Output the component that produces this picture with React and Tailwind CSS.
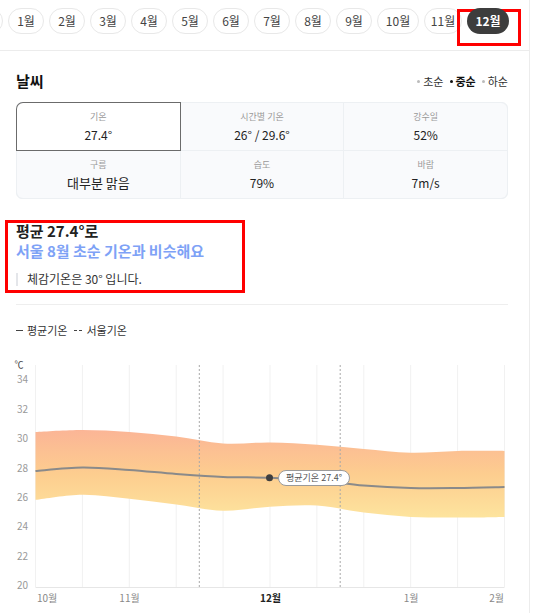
import React from "react";

const months = [
  { label: "", w: "w-[36px]" },
  { label: "1월", w: "w-[36px]" },
  { label: "2월", w: "w-[36px]" },
  { label: "3월", w: "w-[36px]" },
  { label: "4월", w: "w-[36px]" },
  { label: "5월", w: "w-[36px]" },
  { label: "6월", w: "w-[36px]" },
  { label: "7월", w: "w-[36px]" },
  { label: "8월", w: "w-[36px]" },
  { label: "9월", w: "w-[36px]" },
  { label: "10월", w: "w-[42px]" },
  { label: "11월", w: "w-[38px]" },
];

const stats = [
  { label: "기온", value: "27.4°", active: true },
  { label: "시간별 기온", value: "26° / 29.6°" },
  { label: "강수일", value: "52%" },
  { label: "구름", value: "대부분 맑음", big: true },
  { label: "습도", value: "79%" },
  { label: "바람", value: "7m/s" },
];

// chart geometry, in page pixels
const X0 = 35.5;
const STEP = 46.9;
const xs = Array.from({ length: 11 }, (_, i) => X0 + STEP * i);
const yOf = (t) => 586.5 - (t - 20) * 14.7;

const upper = [432, 430, 432, 436.6, 443.5, 442.4, 444.8, 449, 452.7, 451, 451];
const lower = [499.8, 494.7, 498.8, 504.6, 510.8, 506.7, 505.6, 512.5, 516.9, 517.6, 516.9];
const mean = [471, 467.5, 470, 474, 477, 477.7, 480.5, 485.5, 488, 488, 487];

const segs = (pts) => {
  let d = "";
  for (let i = 0; i < pts.length - 1; i++) {
    const p0 = pts[i - 1] || pts[i];
    const p1 = pts[i];
    const p2 = pts[i + 1];
    const p3 = pts[i + 2] || p2;
    const c1x = p1[0] + (p2[0] - p0[0]) / 6;
    const c1y = p1[1] + (p2[1] - p0[1]) / 6;
    const c2x = p2[0] - (p3[0] - p1[0]) / 6;
    const c2y = p2[1] - (p3[1] - p1[1]) / 6;
    d += ` C${c1x},${c1y} ${c2x},${c2y} ${p2[0]},${p2[1]}`;
  }
  return d;
};

const upPts = xs.map((x, i) => [x, upper[i]]);
const loPts = xs.map((x, i) => [x, lower[i]]).reverse();
const meanPts = xs.map((x, i) => [x, mean[i]]);

const bandPath = `M${upPts[0][0]},${upPts[0][1]}${segs(upPts)} L${loPts[0][0]},${loPts[0][1]}${segs(loPts)} Z`;
const meanPath = `M${meanPts[0][0]},${meanPts[0][1]}${segs(meanPts)}`;

const Chart = () => (
  <svg width="530" height="273" viewBox="0 340 530 273" className="block mt-[3px]" fontFamily="'Noto Sans CJK KR', sans-serif">
    <defs>
      <linearGradient id="band" x1="0" y1="430" x2="0" y2="518" gradientUnits="userSpaceOnUse">
        <stop offset="0" stopColor="#fbb596" />
        <stop offset="0.5" stopColor="#fdcd8f" />
        <stop offset="1" stopColor="#fde49e" />
      </linearGradient>
    </defs>
    <text x="19" y="366" fontSize="9" fill="#444" textAnchor="middle" dominantBaseline="middle">℃</text>
    {[34, 32, 30, 28, 26, 24, 22, 20].map((t) => (
      <text key={t} x="28" y={yOf(t)} fontSize="10" fill="#999" textAnchor="end" dominantBaseline="middle">{t}</text>
    ))}
    {xs.map((x) => (
      <line key={x} x1={x} y1="365" x2={x} y2="587" stroke="#f1f1f1" strokeWidth="1" />
    ))}
    <path d={bandPath} fill="url(#band)" />
    <line x1="199.3" y1="365" x2="199.3" y2="587" stroke="#a8a8a8" strokeWidth="1" strokeDasharray="2 2" />
    <line x1="340.2" y1="365" x2="340.2" y2="587" stroke="#a8a8a8" strokeWidth="1" strokeDasharray="2 2" />
    <line x1={X0} y1="587.5" x2={xs[10]} y2="587.5" stroke="#e6e6e6" strokeWidth="1" />
    <path d={meanPath} fill="none" stroke="#8a8a8a" strokeWidth="2" />
    <circle cx="269.5" cy="477.7" r="3.5" fill="#3f3f3f" />
    <rect x="278.5" y="470.5" width="71" height="15" rx="7.5" fill="#fff" stroke="#9a9a9a" strokeWidth="1" />
    <text x="314" y="478.5" fontSize="9" fill="#555" textAnchor="middle" dominantBaseline="middle">평균기온 27.4°</text>
    <text x="37" y="599" fontSize="10" fill="#888" dominantBaseline="middle">10월</text>
    <text x="129.5" y="599" fontSize="10" fill="#888" textAnchor="middle" dominantBaseline="middle">11월</text>
    <text x="270.5" y="599" fontSize="10" fill="#222" fontWeight="700" textAnchor="middle" dominantBaseline="middle">12월</text>
    <text x="411" y="599" fontSize="10" fill="#888" textAnchor="middle" dominantBaseline="middle">1월</text>
    <text x="504" y="599" fontSize="10" fill="#888" textAnchor="end" dominantBaseline="middle">2월</text>
  </svg>
);

const App = () => {
  return (
    <div className="min-h-screen bg-white">
      <div className="w-[530px] min-h-screen border-r border-[#ececec] font-['Noto_Sans_CJK_KR',sans-serif] text-[#222]">
        {/* month tabs */}
        <div className="relative h-[51px] border-b border-[#ececec] overflow-hidden">
          <div className="flex gap-[5px] pt-[8px] ml-[-33px]">
            {months.map((m, i) => (
              <div
                key={i}
                className={`${m.w} h-[26px] shrink-0 rounded-full border border-[#e8e8e8] flex items-center justify-center text-[12px] leading-none text-[#444]`}
              >
                {m.label}
              </div>
            ))}
            <div className="relative z-10 w-[42px] h-[26px] shrink-0 rounded-full bg-[#3d3d3d] flex items-center justify-center text-[12px] leading-none font-bold text-white">
              12월
            </div>
          </div>
          <div className="absolute left-[457px] top-[9px] w-[64px] h-[37px] border-[3px] border-[#ff0000]" />
        </div>

        <div className="pl-4 pr-[21px]">
          {/* weather header */}
          <div className="pt-[20px] h-[40px] flex items-center justify-between">
            <div className="text-[15px] leading-[18px] font-bold text-[#111]">날씨</div>
            <div className="flex items-center gap-[6px] text-[11px] leading-none text-[#333]">
              <span className="flex items-center gap-[3px]">
                <span className="w-[3px] h-[3px] rounded-full bg-[#bbb]" />
                초순
              </span>
              <span className="flex items-center gap-[3px] font-bold text-[#111]">
                <span className="w-[3px] h-[3px] rounded-full bg-[#111]" />
                중순
              </span>
              <span className="flex items-center gap-[3px]">
                <span className="w-[3px] h-[3px] rounded-full bg-[#bbb]" />
                하순
              </span>
            </div>
          </div>

          {/* stats grid */}
          <div className="mt-[11px] grid grid-cols-3 gap-px bg-[#edf0f3] border border-[#edf0f3] rounded-md">
            {stats.map((s, i) => (
              <div
                key={s.label}
                className={`h-[47px] flex flex-col items-center justify-center ${
                  s.active
                    ? "relative z-10 bg-white shadow-[0_0_0_1px_#6b6b6b] rounded-tl-md"
                    : "bg-[#f9fafc]"
                } ${i === 2 ? "rounded-tr-md" : ""} ${i === 3 ? "rounded-bl-md" : ""} ${i === 5 ? "rounded-br-md" : ""}`}
              >
                <div className="text-[9px] leading-[12px] text-[#999]">{s.label}</div>
                <div className={`${s.big ? "text-[13px]" : "text-[12px]"} leading-[17px] mt-[3px] text-[#222]`}>{s.value}</div>
              </div>
            ))}
          </div>

          {/* summary */}
          <div className="relative mt-[22px]">
            <div className="absolute left-[-11px] top-[-1px] w-[240px] h-[73px] border-[3px] border-[#ff0000]" />
            <div className="text-[15px] leading-[20px] font-bold text-[#222]">평균 27.4°로</div>
            <div className="text-[15px] leading-[20px] font-bold text-[#7ea2f6]">서울 8월 초순 기온과 비슷해요</div>
            <div className="mt-[10px] flex items-center h-[16px]">
              <span className="w-[2px] h-[13px] bg-[#e4e6ea]" />
              <span className="ml-[9px] text-[12px] leading-[16px] text-[#333]">체감기온은 30° 입니다.</span>
            </div>
          </div>

          <div className="mt-[17px] h-px bg-[#eeeeee]" />

          {/* legend */}
          <div className="mt-[18px] h-[14px] flex items-center text-[11px] leading-none text-[#333]">
            <span className="w-[7px] h-px bg-[#444]" />
            <span className="ml-[4px]">평균기온</span>
            <span className="ml-[7px] flex gap-[2px]">
              <span className="w-[3px] h-px bg-[#444]" />
              <span className="w-[3px] h-px bg-[#444]" />
            </span>
            <span className="ml-[4px]">서울기온</span>
          </div>
        </div>

        <Chart />
      </div>
    </div>
  );
};

export default App;
